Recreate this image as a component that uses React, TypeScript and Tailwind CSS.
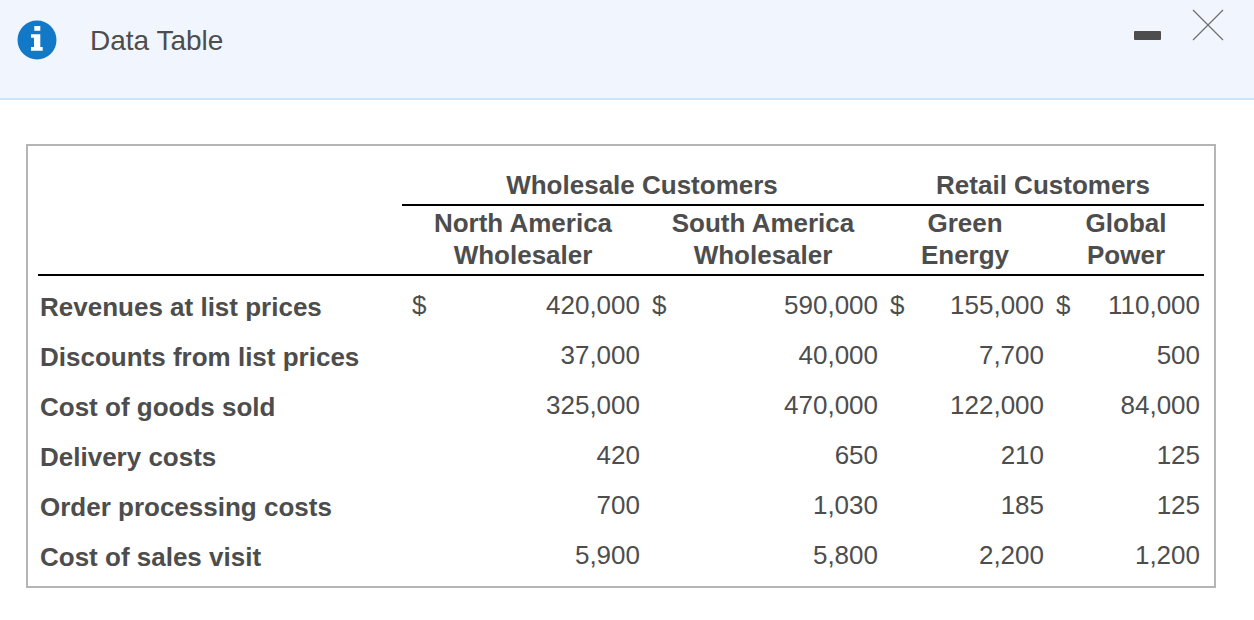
const rows = [
  { label: 'Revenues at list prices', values: ['420,000', '590,000', '155,000', '110,000'], dollar: true },
  { label: 'Discounts from list prices', values: ['37,000', '40,000', '7,700', '500'] },
  { label: 'Cost of goods sold', values: ['325,000', '470,000', '122,000', '84,000'] },
  { label: 'Delivery costs', values: ['420', '650', '210', '125'] },
  { label: 'Order processing costs', values: ['700', '1,030', '185', '125'] },
  { label: 'Cost of sales visit', values: ['5,900', '5,800', '2,200', '1,200'] },
];

export default function App() {
  return (
    <div className="h-[620px] w-[1254px] overflow-hidden bg-white font-['Liberation_Sans',Arial,sans-serif] text-[#4d4d4d]">
      {/* Barra de titulo */}
      <div className="flex h-[100px] items-start border-b-2 border-[#cde6f7] bg-[#f1f6fe] pl-[17px] pr-[30px]">
        <svg viewBox="0 0 40 40" className="mt-[20px] h-[40px] w-[40px]">
          <circle cx="20" cy="20" r="19.5" fill="#1279c9" />
          <path d="M17.3 6h6v4.7h-6z M14 14.3h9.3V27h2.4v3.7H14V27h3V17.7h-3z" fill="#fff" />
        </svg>
        <div className="ml-[33px] mt-[25px] text-[28px] leading-[32px]">Data Table</div>
        <div className="ml-auto mt-[31px] h-[9px] w-[27px] rounded-[1px] bg-[#4d4d4d]" />
        <svg viewBox="0 0 32 32" className="ml-[31px] mt-[9px] h-[32px] w-[32px]">
          <path d="M1 1l30 30M31 1L1 31" stroke="#6e6e6e" strokeWidth="1.2" fill="none" />
        </svg>
      </div>

      <div className="mx-[26px] mt-[44px] h-[444px] w-[1190px] border-2 border-[#b5b5b5] pl-[10px] pr-[10px] pt-[20px]">
        <table className="w-[1166px] table-fixed border-collapse text-[26px] leading-[30px]">
          <colgroup>
            <col className="w-[364px]" />
            <col className="w-[242px]" />
            <col className="w-[238px]" />
            <col className="w-[166px]" />
            <col className="w-[156px]" />
          </colgroup>
          <thead className="font-bold">
            <tr>
              <th />
              <th colSpan={2} className="h-[39px] border-b-2 border-black text-center font-bold leading-[32px]">
                Wholesale Customers
              </th>
              <th colSpan={2} className="h-[39px] border-b-2 border-black text-center font-bold leading-[32px]">
                Retail Customers
              </th>
            </tr>
            <tr className="border-b-2 border-black">
              <th />
              <th className="h-[70px] pb-[3px] text-center font-bold leading-[32px]">North America<br />Wholesaler</th>
              <th className="h-[70px] pb-[3px] text-center font-bold leading-[32px]">South America<br />Wholesaler</th>
              <th className="h-[70px] pb-[3px] text-center font-bold leading-[32px]">Green<br />Energy</th>
              <th className="h-[70px] pb-[3px] text-center font-bold leading-[32px]">Global<br />Power</th>
            </tr>
          </thead>
          <tbody>
            {rows.map((row) => (
              <tr key={row.label} className="h-[50px]">
                <td className={row.dollar ? 'pl-[2px] pt-[12px] font-bold' : 'pl-[2px] pt-[14px] font-bold'}>{row.label}</td>
                {row.values.map((v, i) => (
                  <td key={v + i} className={row.dollar ? 'relative pr-[4px] pt-[8px] text-right' : 'relative pr-[4px] pt-[10px] text-right'}>
                    {row.dollar && <span className={i === 0 ? 'absolute left-[10px]' : 'absolute left-[8px]'}>$</span>}
                    {v}
                  </td>
                ))}
              </tr>
            ))}
          </tbody>
        </table>
      </div>
    </div>
  );
}
